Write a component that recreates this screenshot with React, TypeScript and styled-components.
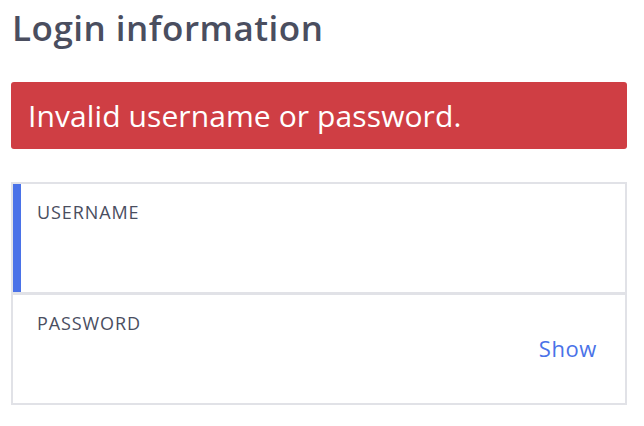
import React from "react";
import styled, { createGlobalStyle } from "styled-components";

const Global = createGlobalStyle`
  html, body { margin: 0; padding: 0; background: #ffffff; }
  body { font-family: "Open Sans", Lato, sans-serif; }
`;

const Page = styled.div`
  padding: 0 17px 0 11px;
  display: flex;
  flex-direction: column;
`;

const Title = styled.h1`
  margin: 6px 0 0 1px;
  font-size: 35px;
  line-height: 44px;
  font-weight: 600;
  letter-spacing: 0.5px;
  color: #4a4e5f;
`;

const Alert = styled.div`
  margin-top: 32px;
  height: 67px;
  background: #cf3e44;
  border-radius: 3px;
  color: #ffffff;
  font-size: 30px;
  letter-spacing: 0.1px;
  display: flex;
  align-items: center;
  padding-left: 17px;
  box-sizing: border-box;
`;

const Form = styled.div`
  margin-top: 33px;
  border: 2px solid #e1e2e7;
  display: flex;
  flex-direction: column;
`;

const Field = styled.div<{ $active?: boolean }>`
  height: 108px;
  box-sizing: border-box;
  padding: 16px 28px 0 ${(p) => (p.$active ? "16px" : "24px")};
  border-left: ${(p) => (p.$active ? "8px solid #4a72e8" : "none")};
  display: flex;
  justify-content: space-between;
  & + & {
    height: 111px;
    border-top: 3px solid #e1e2e7;
  }
`;

const Label = styled.div`
  font-size: 18px;
  letter-spacing: 0.9px;
  color: #4a4e5f;
`;

const Show = styled.button`
  align-self: flex-start;
  margin-top: 22px;
  background: none;
  border: none;
  padding: 0;
  font-family: inherit;
  font-size: 22px;
  letter-spacing: 0.6px;
  color: #4a72e8;
  cursor: pointer;
`;

export default function App() {
  return (
    <>
      <Global />
      <Page>
        <Title>Login information</Title>
        <Alert>Invalid username or password.</Alert>
        <Form>
          <Field $active>
            <Label>USERNAME</Label>
          </Field>
          <Field>
            <Label>PASSWORD</Label>
            <Show>Show</Show>
          </Field>
        </Form>
      </Page>
    </>
  );
}
